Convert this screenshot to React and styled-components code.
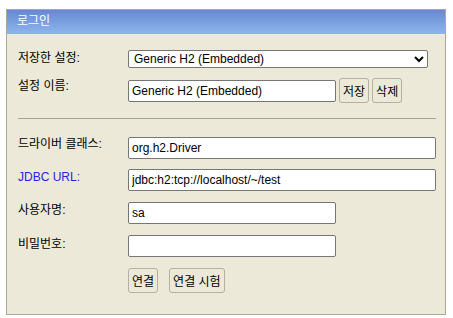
import React from 'react';
import styled, { createGlobalStyle } from 'styled-components';

const Global = createGlobalStyle`
  html, body { margin: 0; padding: 0; background: #ffffff; }
  body {
    font-family: "Liberation Sans", "Noto Sans CJK KR", sans-serif;
    font-size: 12px;
    color: #000;
  }
`;

const Panel = styled.div`
  box-sizing: border-box;
  width: 440px;
  margin: 9px 0 0 6px;
  border: 1px solid #aca899;
  background: #ece9d8;
`;

const Header = styled.div`
  box-sizing: border-box;
  height: 24px;
  padding: 4px 10px 0;
  background: linear-gradient(#6789cf, #8db5ee);
  color: #ffffff;
  line-height: 14px;
`;

const Body = styled.div`
  padding: 0 9px 21px 11px;
`;

const Row = styled.div`
  display: flex;
  align-items: flex-start;
  margin-top: ${(p) => p.$mt}px;
`;

const Label = styled.div`
  flex: none;
  width: 110px;
  line-height: 14px;
  margin-top: ${(p) => p.$dy}px;
  color: ${(p) => (p.$link ? '#2424e6' : '#000')};
`;

const Field = styled.div`
  flex: 1;
  display: flex;
  align-items: center;
  gap: ${(p) => p.$gap || 3}px;
`;

const TextInput = styled.input`
  box-sizing: border-box;
  width: ${(p) => (p.$w ? `${p.$w}px` : '100%')};
  height: 22px;
  margin: 0;
  padding: 0 3px;
  border: 1px solid #767676;
  border-radius: 2px;
  background: #ffffff;
  font-family: "Liberation Sans", "Noto Sans CJK KR", sans-serif;
  font-size: 12px;
  color: #000;
  outline: none;
`;

const Select = styled.select`
  box-sizing: border-box;
  width: 300px;
  height: 18px;
  margin: 0;
  padding: 0 1px;
  border: 1px solid #767676;
  border-radius: 2px;
  background: #ffffff;
  font-family: "Liberation Sans", "Noto Sans CJK KR", sans-serif;
  font-size: 12px;
  color: #000;
  outline: none;
`;

const Button = styled.button`
  box-sizing: border-box;
  height: 25px;
  margin: 0;
  padding: 0 3px;
  border: 1px solid #b2afa3;
  border-radius: 3px;
  background: #ece9d8;
  font-family: "Liberation Sans", "Noto Sans CJK KR", sans-serif;
  font-size: 12px;
  color: #000;
  cursor: pointer;
`;

const Separator = styled.div`
  height: 1px;
  margin-top: 15px;
  background: #a3a39a;
`;

export default function App() {
  return (
    <>
      <Global />
      <Panel>
        <Header>로그인</Header>
        <Body>
          <Row $mt={16}>
            <Label $dy={1}>저장한 설정:</Label>
            <Field>
              <Select defaultValue="Generic H2 (Embedded)">
                <option>Generic H2 (Embedded)</option>
              </Select>
            </Field>
          </Row>
          <Row $mt={10}>
            <Label $dy={1}>설정 이름:</Label>
            <Field>
              <TextInput $w={208} defaultValue="Generic H2 (Embedded)" />
              <Button>저장</Button>
              <Button>삭제</Button>
            </Field>
          </Row>
          <Separator />
          <Row $mt={18}>
            <Label $dy={0}>드라이버 클래스:</Label>
            <Field>
              <TextInput defaultValue="org.h2.Driver" />
            </Field>
          </Row>
          <Row $mt={10}>
            <Label $dy={1} $link>JDBC URL:</Label>
            <Field>
              <TextInput defaultValue="jdbc:h2:tcp://localhost/~/test" />
            </Field>
          </Row>
          <Row $mt={11}>
            <Label $dy={1}>사용자명:</Label>
            <Field>
              <TextInput $w={208} defaultValue="sa" />
            </Field>
          </Row>
          <Row $mt={11}>
            <Label $dy={2}>비밀번호:</Label>
            <Field>
              <TextInput $w={208} type="password" defaultValue="" />
            </Field>
          </Row>
          <Row $mt={11}>
            <Label $dy={0} />
            <Field $gap={11}>
              <Button>연결</Button>
              <Button>연결 시험</Button>
            </Field>
          </Row>
        </Body>
      </Panel>
    </>
  );
}
